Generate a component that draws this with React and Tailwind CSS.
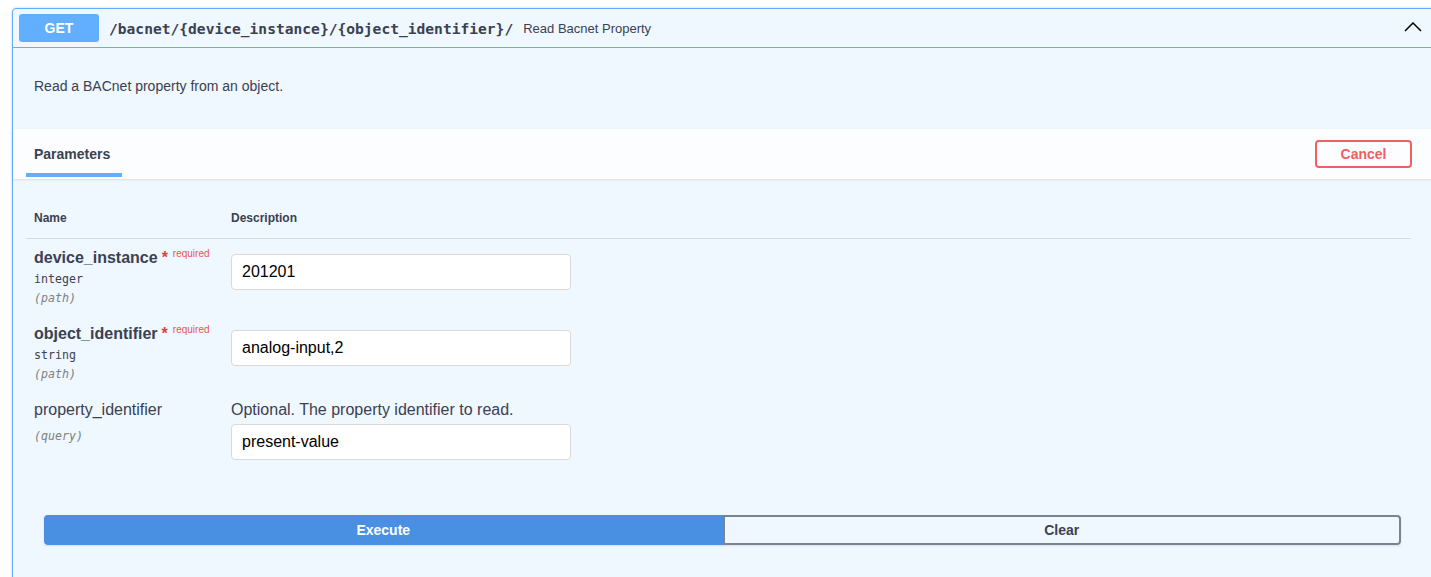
import { useState } from 'react';

const sans = { fontFamily: '"Liberation Sans", Arial, sans-serif' };
const mono = { fontFamily: '"DejaVu Sans Mono", "Liberation Mono", monospace' };

const params = [
  { name: 'device_instance', type: 'integer', where: 'path', required: true, value: '201201' },
  { name: 'object_identifier', type: 'string', where: 'path', required: true, value: 'analog-input,2' },
  {
    name: 'property_identifier',
    where: 'query',
    required: false,
    value: 'present-value',
    description: 'Optional. The property identifier to read.',
  },
];

function ParamRow({ p, onChange }) {
  return (
    <div className="flex pl-[8px]">
      <div className="w-[197px] shrink-0">
        <div className={`h-[20px] leading-[20px] text-[16px] text-[#3b4151] ${p.required ? 'font-bold' : ''}`}>
          {p.name}
          {p.required && (
            <>
              <span className="text-[#e53e3e] ml-[4px]">*</span>
              <span className="relative top-[-6px] ml-[5px] text-[10px] font-normal text-[#ee5555]">required</span>
            </>
          )}
        </div>
        {p.type ? (
          <div className="mt-[2px] h-[19px] leading-[19px] text-[11.6px] text-[#3b4151]" style={mono}>
            {p.type}
          </div>
        ) : null}
        <div
          className={`h-[19px] leading-[19px] text-[11.6px] italic text-[#808080] ${p.type ? '' : 'mt-[7px]'}`}
          style={mono}
        >
          ({p.where})
        </div>
      </div>
      <div className={p.description ? '' : 'pt-[6px]'}>
        {p.description && (
          <div className="h-[20px] leading-[20px] text-[16px] text-[#3b4151] mb-[4px]">{p.description}</div>
        )}
        <input
          value={p.value}
          onChange={(e) => onChange(p.name, e.target.value)}
          className="w-[340px] h-[36px] px-[10px] bg-white border border-[#d9d9d9] rounded-[4px] text-[16px] text-black outline-none"
          style={sans}
        />
      </div>
    </div>
  );
}

export default function App() {
  const [values, setValues] = useState(params);

  const update = (name, value) => {
    setValues((prev) => prev.map((p) => (p.name === name ? { ...p, value } : p)));
  };

  return (
    <div className="w-[1431px] h-[577px] overflow-hidden bg-white" style={sans}>
      <div className="ml-[12px] mt-[8px] w-[1426px] border border-[#61affe] rounded-[4px] bg-[#eff7ff] shadow-[0_0_3px_rgba(0,0,0,0.19)]">
        {/* summary bar */}
        <div className="h-[39px] flex items-center pl-[6px] border-b border-[#61affe]">
          <div className="w-[80px] h-[28px] flex items-center justify-center rounded-[3px] bg-[#61affe] text-white text-[14px] font-bold">
            GET
          </div>
          <div className="ml-[10px] mt-[2px] text-[14.6px] font-bold text-[#3b4151]" style={mono}>
            /bacnet/{'{device_instance}'}/{'{object_identifier}'}/
          </div>
          <div className="ml-[10px] mt-[1px] text-[13px] text-[#3b4151]">Read Bacnet Property</div>
          <svg width="18" height="10" viewBox="0 0 18 10" className="ml-auto mr-[15px] mt-[-2px]">
            <polyline points="1,9 9,1 17,9" fill="none" stroke="#000" strokeWidth="1.5" />
          </svg>
        </div>

        {/* description */}
        <div className="pt-[30px] pb-[35px] pl-[21px] text-[14px] leading-[16px] text-[#3b4151]">
          Read a BACnet property from an object.
        </div>

        {/* section header */}
        <div className="h-[50px] flex items-center bg-[#fcfdff] shadow-[0_1px_2px_rgba(0,0,0,0.1)]">
          <div className="ml-[13px] w-[96px] h-full flex flex-col">
            <div className="flex-1 flex items-center pl-[8px] pt-[6px] text-[14px] font-bold text-[#3b4151]">
              Parameters
            </div>
            <div className="h-[4px] mb-[2px] bg-[#61affe]" />
          </div>
          <button className="ml-auto mr-[25px] w-[97px] h-[28px] rounded-[4px] border-2 border-[#f06060] bg-transparent text-[14px] font-bold text-[#f06060]">
            Cancel
          </button>
        </div>

        {/* parameter table */}
        <div className="ml-[13px] w-[1385px]">
          <div className="flex pl-[8px] pt-[31px] pb-[12px] border-b border-[#d7dae0] text-[12px] font-bold text-[#3b4151] leading-[16px]">
            <div className="w-[197px]">Name</div>
            <div>Description</div>
          </div>
          <div className="pt-[9px] flex flex-col gap-[16px]">
            {values.map((p) => (
              <ParamRow key={p.name} p={p} onChange={update} />
            ))}
          </div>
        </div>

        {/* actions */}
        <div className="pl-[31px] pt-[55px] pb-[40px]">
          <div className="w-[1357px] flex h-[30px] shadow-[0_1px_2px_rgba(0,0,0,0.1)]">
            <button className="flex-1 rounded-l-[4px] bg-[#4990e2] border-2 border-[#4990e2] text-white text-[14px] font-bold">
              Execute
            </button>
            <button className="flex-1 rounded-r-[4px] bg-transparent border-2 border-[#7d8293] text-[#3b4151] text-[14px] font-bold">
              Clear
            </button>
          </div>
        </div>
      </div>
    </div>
  );
}
